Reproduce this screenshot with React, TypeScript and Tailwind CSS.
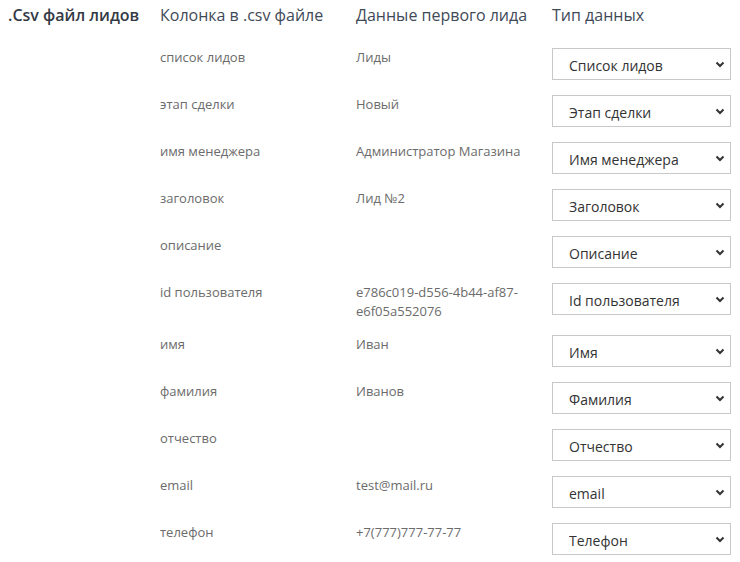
import React from "react";

const rows: { col: string; data: string; type: string }[] = [
  { col: "список лидов", data: "Лиды", type: "Список лидов" },
  { col: "этап сделки", data: "Новый", type: "Этап сделки" },
  { col: "имя менеджера", data: "Администратор Магазина", type: "Имя менеджера" },
  { col: "заголовок", data: "Лид №2", type: "Заголовок" },
  { col: "описание", data: "", type: "Описание" },
  { col: "id пользователя", data: "e786c019-d556-4b44-af87-e6f05a552076", type: "Id пользователя" },
  { col: "имя", data: "Иван", type: "Имя" },
  { col: "фамилия", data: "Иванов", type: "Фамилия" },
  { col: "отчество", data: "", type: "Отчество" },
  { col: "email", data: "test@mail.ru", type: "email" },
  { col: "телефон", data: "+7(777)777-77-77", type: "Телефон" },
];

function Chevron() {
  return (
    <svg width="10" height="7" viewBox="0 0 10 7" className="pointer-events-none absolute right-[6px] top-[13px]">
      <path d="M1.5 1.5 L5 5 L8.5 1.5" fill="none" stroke="#333" strokeWidth="2" />
    </svg>
  );
}

export default function App() {
  return (
    <div className="flex bg-white w-[740px] h-[562px] overflow-hidden" style={{ fontFamily: '"Open Sans", sans-serif' }}>
      <div className="w-[160px] shrink-0 pl-[8px] pt-[4px] text-[16px] leading-[22px] font-semibold text-[#333a45]">
        .Csv файл лидов
      </div>
      <div className="flex flex-col">
        <div className="flex pt-[4px] text-[16px] leading-[22px] text-[#3f4a58]">
          <div className="w-[196px]">Колонка в .csv файле</div>
          <div className="w-[196px]">Данные первого лида</div>
          <div>Тип данных</div>
        </div>
        <div className="flex flex-col mt-[22px]">
          {rows.map((r) => (
            <div key={r.col} className="flex items-start mb-[15px]">
              <div className="w-[196px] text-[13px] leading-[18.5px] text-[#6b6b6b]">{r.col}</div>
              <div className="w-[196px] pr-[10px] text-[13px] leading-[18.5px] text-[#6b6b6b]">{r.data}</div>
              <div className="relative w-[179px] h-[32px]">
                <select
                  defaultValue={r.type}
                  className="appearance-none w-full h-full border border-[#c8c8c8] bg-white pl-[16px] pt-[2px] text-[14px] text-[#333] outline-none rounded-none"
                  style={{ fontFamily: '"Open Sans", sans-serif' }}
                >
                  <option value={r.type}>{r.type}</option>
                </select>
                <Chevron />
              </div>
            </div>
          ))}
        </div>
      </div>
    </div>
  );
}
